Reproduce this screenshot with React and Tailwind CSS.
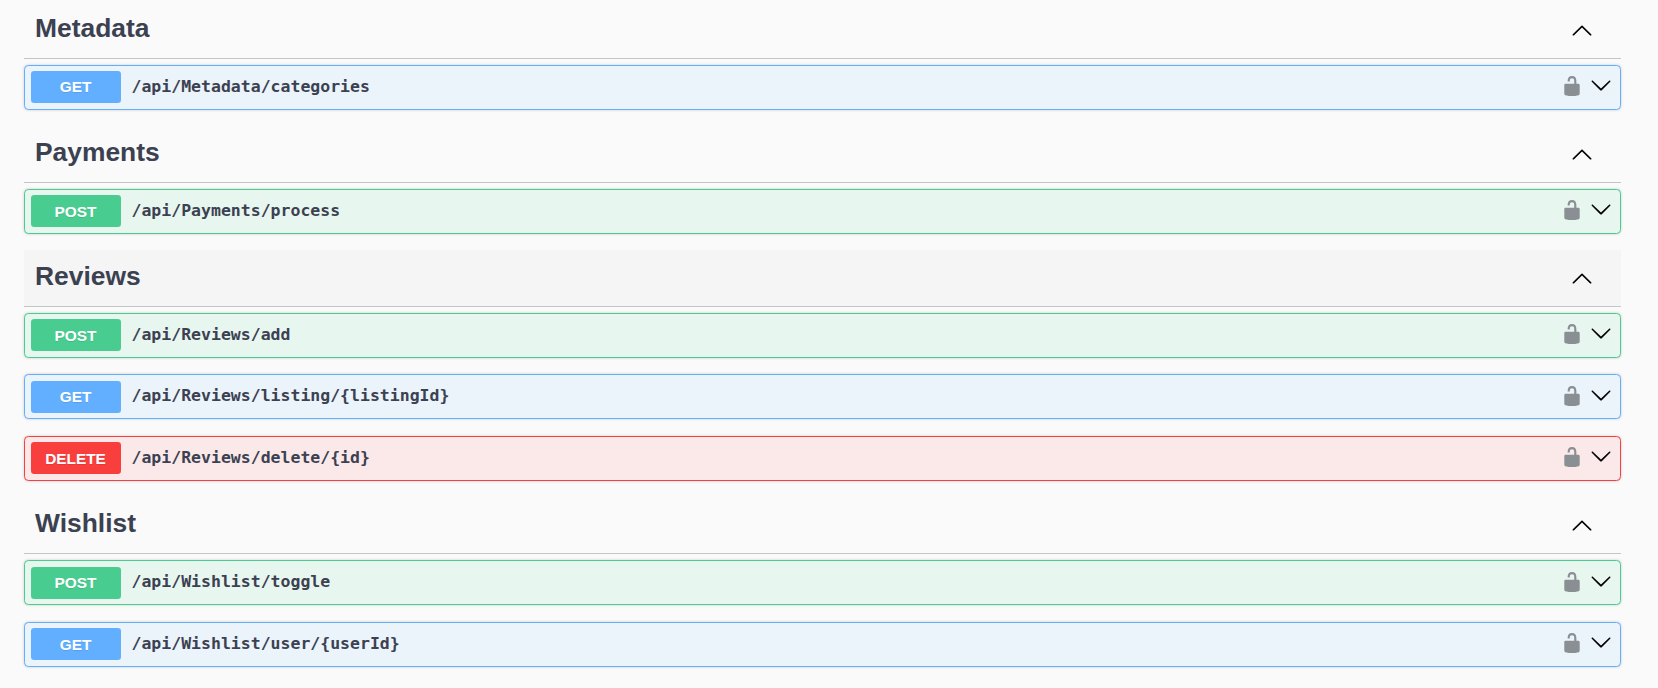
const ArrowUp = () => (
  <svg viewBox="0 0 20 20" className="w-[22px] h-[22px] block" fill="currentColor">
    <path d="M 17.418 14.908 C 17.69 15.176 18.127 15.176 18.397 14.908 C 18.667 14.64 18.668 14.207 18.397 13.939 L 10.489 6.109 C 10.219 5.841 9.782 5.841 9.51 6.109 L 1.602 13.939 C 1.332 14.207 1.332 14.64 1.602 14.908 C 1.873 15.176 2.311 15.176 2.581 14.908 L 10 7.767 L 17.418 14.908 Z" />
  </svg>
);
const ArrowDown = () => (
  <svg viewBox="0 0 20 20" className="w-[22px] h-[22px] block" fill="currentColor">
    <path d="M 17.418 6.109 C 17.69 5.841 18.127 5.841 18.397 6.109 C 18.667 6.377 18.668 6.81 18.397 7.078 L 10.489 14.908 C 10.219 15.176 9.782 15.176 9.51 14.908 L 1.602 7.078 C 1.332 6.81 1.332 6.377 1.602 6.109 C 1.873 5.841 2.311 5.841 2.581 6.109 L 10 13.25 L 17.418 6.109 Z" />
  </svg>
);
const Lock = () => (
  <svg viewBox="0 0 20 20" className="w-[22px] h-[22px] block" fill="#8a8f94">
    <path d="M15.8 8H14V5.6C14 2.703 12.665 1 10 1 7.334 1 6 2.703 6 5.6V6h2v-.801C8 3.754 8.797 3 10 3c1.203 0 2 .754 2 2.199V8H4c-.553 0-1 .646-1 1.199V17c0 .549.428 1.139.951 1.307l1.197.387C5.672 18.861 6.55 19 7.1 19h5.8c.549 0 1.428-.139 1.951-.307l1.196-.387c.524-.167.953-.757.953-1.306V9.199C17 8.646 16.352 8 15.8 8z" />
  </svg>
);

const styles = {
  GET: { row: "border-[#61affe] bg-[#ebf3fb]", badge: "bg-[#61affe]" },
  POST: { row: "border-[#49cc90] bg-[#e8f6f0]", badge: "bg-[#49cc90]" },
  DELETE: { row: "border-[#f93e3e] bg-[#fbe9e9]", badge: "bg-[#f93e3e]" },
};

const Row = ({ method, path }) => (
  <div className={`flex items-center h-[45.1px] mb-[16.5px] px-[5.5px] border rounded-[4.4px] shadow-[0_0_3px_rgba(0,0,0,0.19)] ${styles[method].row}`}>
    <span className={`w-[90px] h-[32px] shrink-0 flex items-center justify-center rounded-[3.3px] text-white font-bold text-[15.4px] [text-shadow:0_1px_0_rgba(0,0,0,0.1)] font-['Liberation_Sans',sans-serif] ${styles[method].badge}`}>
      {method}
    </span>
    <span className="ml-[11px] font-['DejaVu_Sans_Mono',monospace] font-bold text-[16.5px] text-[#3b4151]">{path}</span>
    <div className="ml-auto flex items-center text-black">
      <span className="-mt-[2px]"><Lock /></span>
      <span className="ml-[7px] mr-[3px] -mt-[4px]"><ArrowDown /></span>
    </div>
  </div>
);

const Section = ({ title, hover, rows }) => (
  <section>
    <div className={`flex items-center h-[57px] mb-[5.5px] pl-[11px] border-b border-[#c4c5c9] ${hover ? "bg-[#f5f5f5]" : ""}`}>
      <h3 className="font-['Liberation_Sans',sans-serif] font-bold text-[26.4px] text-[#3b4151] -mt-[3px]">{title}</h3>
      <span className="ml-auto mr-[28px] -mt-[1px] text-black"><ArrowUp /></span>
    </div>
    {rows.map(([m, p]) => <Row key={p} method={m} path={p} />)}
  </section>
);

export default function App() {
  return (
    <div className="min-h-[688px] bg-[#fafafa] pl-[24px] pr-[37px] pt-[2px] overflow-hidden">
      <Section title="Metadata" rows={[["GET", "/api/Metadata/categories"]]} />
      <Section title="Payments" rows={[["POST", "/api/Payments/process"]]} />
      <Section title="Reviews" hover rows={[["POST", "/api/Reviews/add"], ["GET", "/api/Reviews/listing/{listingId}"], ["DELETE", "/api/Reviews/delete/{id}"]]} />
      <Section title="Wishlist" rows={[["POST", "/api/Wishlist/toggle"], ["GET", "/api/Wishlist/user/{userId}"]]} />
    </div>
  );
}
